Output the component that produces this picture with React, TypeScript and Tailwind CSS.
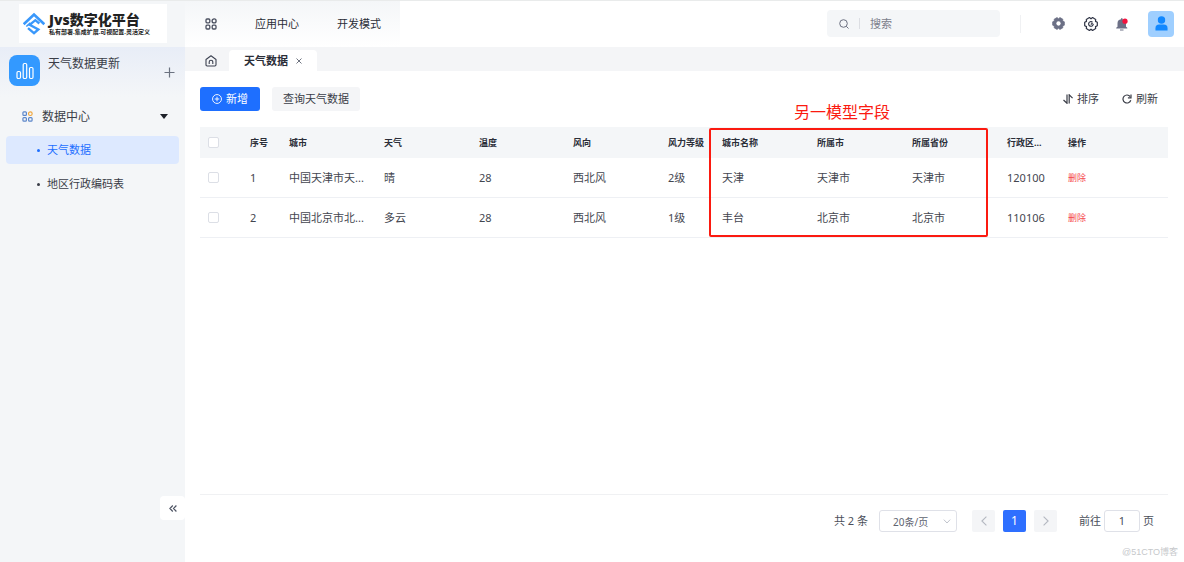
import React, { useState } from 'react';

interface WeatherRow {
  id: number;
  city: string;
  weather: string;
  temp: string;
  wind: string;
  level: string;
  name: string;
  belongCity: string;
  province: string;
  code: string;
}

const ROWS: WeatherRow[] = [
  { id: 1, city: '中国天津市天...', weather: '晴', temp: '28', wind: '西北风', level: '2级', name: '天津', belongCity: '天津市', province: '天津市', code: '120100' },
  { id: 2, city: '中国北京市北...', weather: '多云', temp: '28', wind: '西北风', level: '1级', name: '丰台', belongCity: '北京市', province: '北京市', code: '110106' },
];

const COLUMNS = [
  { title: '序号', width: 'w-[39px]' },
  { title: '城市', width: 'w-[95px]' },
  { title: '天气', width: 'w-[95px]' },
  { title: '温度', width: 'w-[94px]' },
  { title: '风向', width: 'w-[95px]' },
  { title: '风力等级', width: 'w-[54px]' },
  { title: '城市名称', width: 'w-[95px]' },
  { title: '所属市', width: 'w-[95px]' },
  { title: '所属省份', width: 'w-[95px]' },
  { title: '行政区...', width: 'w-[61px]' },
  { title: '操作', width: '' },
];

// six-lobed gear outline, shared by both settings buttons
const GEAR = 'M13.3 5.2V8.8L11.5 9.6 11.7 11.6 8.6 13.4 7 12.2 5.4 13.4 2.3 11.6 2.5 9.6.7 8.8V5.2L2.5 4.4 2.3 2.4 5.4.6 7 1.8 8.600.6 11.700 2.400 11.500 4.400Z';

const Logo = () => (
  <svg viewBox="0 0 66 68" className="w-[22px] h-[23px] shrink-0" fill="none" stroke="#3a98fb" strokeWidth="8">
    <path d="M2 36 33 7 64 36" />
    <path d="M49 34 37 24 20 38 46 52 33 63 15 48" strokeWidth="7" />
    <path d="M10 43 22 32" strokeWidth="5" />
  </svg>
);

const AppsIcon = ({ className, accent }: { className: string; accent?: string }) => (
  <svg viewBox="0 0 12 12" className={className} fill="none" stroke="currentColor" strokeWidth="1.3">
    <rect x="1" y="1" width="3.8" height="3.8" rx="1" />
    <circle cx="9.1" cy="2.9" r="2" stroke={accent || 'currentColor'} />
    <rect x="1" y="7.2" width="3.8" height="3.8" rx="1" />
    <rect x="7.2" y="7.2" width="3.8" height="3.8" rx="1" />
  </svg>
);

const Checkbox = ({ label }: { label: string }) => (
  <input
    type="checkbox"
    aria-label={label}
    className="block w-[11px] h-[11px] ml-2 appearance-none rounded-xs border border-[#dcdfe6] bg-white checked:bg-[#1e6fff]"
  />
);

const Sidebar = () => (
  <aside className="w-[185px] shrink-0 flex flex-col bg-[#f4f6f8] text-[#3a3d47]">
    <div className="h-[47px] shrink-0 pl-[19px] pt-1">
      <div className="w-[148px] h-[39px] bg-white flex items-center pl-1 gap-1">
        <Logo />
        <div className="text-[#222]">
          <div className="text-[14px] leading-[16px] font-black whitespace-nowrap">Jvs数字化平台</div>
          <div className="text-[6px] leading-[8px] font-bold whitespace-nowrap">私有部署.集成扩展.可视配置.灵活定义</div>
        </div>
      </div>
    </div>

    <div className="h-[50px] shrink-0 flex pl-[9px] pr-[10px] pt-2 bg-linear-to-b from-[#e8edf7] to-[#f4f6f8]">
      <div className="w-[31px] h-[31px] rounded-lg bg-[#3399ff] flex items-center justify-center">
        <svg viewBox="0 0 18 18" className="w-[18px] h-[18px]" fill="none" stroke="#fff" strokeWidth="1.2">
          <rect x="1" y="9.500" width="3.500" height="7" rx="1.200" />
          <rect x="7.200" y="1.500" width="3.500" height="15" rx="1.200" />
          <rect x="13.500" y="5.500" width="3.500" height="11" rx="1.200" />
        </svg>
      </div>
      <span className="ml-2 text-[12px] leading-[18px]">天气数据更新</span>
      <button type="button" aria-label="新建" className="ml-auto mt-3 w-[11px] h-[11px]">
        <svg viewBox="0 0 11 11" className="w-[11px] h-[11px]" stroke="#6b7280" strokeWidth="1.2">
          <path d="M5.5 .5v10M.5 5.5h10" />
        </svg>
      </button>
    </div>

    <nav className="px-[6px] pt-[5px]">
      <button type="button" className="w-full h-[29px] flex items-center pl-4 pr-[11px] text-[12px] leading-[16px]">
        <AppsIcon className="w-[11px] h-[11px] mr-[9px] text-[#5b86c9]" accent="#f0a63c" />
        数据中心
        <svg viewBox="0 0 8 5" className="w-2 h-[5px] ml-auto" fill="#1d2129">
          <path d="M0 0h8L4 5z" />
        </svg>
      </button>
      <a href="#weather" className="mt-[5px] h-[28px] flex items-center pl-[31px] rounded-[4px] bg-[#dde9ff] text-[#1e6fff] text-[11px] leading-[16px]">
        <i className="w-[3px] h-[3px] rounded-full bg-current mr-[7px]"></i>
        天气数据
      </a>
      <a href="#region" className="mt-[6px] h-[28px] flex items-center pl-[31px] text-[11px] leading-[16px]">
        <i className="w-[3px] h-[3px] rounded-full bg-current mr-[7px]"></i>
        地区行政编码表
      </a>
    </nav>

    <button type="button" aria-label="收起菜单" className="mt-auto mb-[42px] ml-auto w-[25px] h-[24px] rounded-[4px] bg-white flex items-center justify-center">
      <svg viewBox="0 0 8 7" className="w-2 h-[7px]" fill="none" stroke="#4e5464" strokeWidth="1.2">
        <path d="M3.8.5.9 3.5l2.9 3M7.4.5l-2.9 3 2.9 3" />
      </svg>
    </button>
  </aside>
);

const TopBar = () => (
  <header className="h-[47px] shrink-0 flex items-center">
    <div className="h-full w-[215px] flex items-center pt-px pl-[20px] bg-linear-to-b from-[#f4f6f8] to-white text-[11px] leading-[16px]">
      <button type="button" aria-label="应用" className="mr-[38px]">
        <AppsIcon className="w-[12px] h-[12px] text-[#4b5060]" />
      </button>
      <a href="#apps" className="mr-[38px]">应用中心</a>
      <a href="#dev">开发模式</a>
    </div>

    <div className="ml-auto w-[173px] h-[27px] rounded-[4px] bg-[#f4f6f8] flex items-center pl-3">
      <svg viewBox="0 0 10 10" className="w-[10px] h-[10px] shrink-0" fill="none" stroke="#6b7080" strokeWidth="1">
        <circle cx="4.5" cy="4.5" r="3.8" />
        <path d="M7.3 7.3 9.5 9.5" />
      </svg>
      <i className="w-px h-[11px] bg-[#dcdee3] mx-[10px] shrink-0"></i>
      <input
        type="text"
        aria-label="搜索"
        placeholder="搜索"
        className="w-full min-w-0 bg-transparent text-[11px] leading-[16px] outline-none placeholder:text-[#7c808c]"
      />
    </div>
    <i className="w-px h-[18px] bg-[#f0f1f3] ml-5"></i>

    <div className="flex items-center ml-[31px] mr-[10px]">
      <button type="button" aria-label="设置">
        <svg viewBox="0 0 14 14" className="w-[13px] h-[13px]" strokeLinejoin="round">
          <path d={GEAR} fill="#6c7086" stroke="#6c7086" strokeWidth=".8" />
          <circle cx="7" cy="7" r="2.300" fill="#fff" />
        </svg>
      </button>
      <button type="button" aria-label="系统配置" className="ml-[18px]">
        <svg viewBox="-1 -1 16 16" className="w-[16px] h-[16px]" fill="none" stroke="#2f3445" strokeWidth="1.2" strokeLinejoin="round" strokeLinecap="round">
          <path d={GEAR} />
          <path d="M9.200 7.400A2.300 2.300 0 1 1 8 4.900M7.200 7.200 8.300 6.300" />
        </svg>
      </button>
      <button type="button" aria-label="消息" className="ml-4">
        <svg viewBox="0 0 14 14" className="w-[14px] h-[14px]">
          <path d="M6 1.300h1.500v1a4.200 4.200 0 0 1 3.500 4.200v3.200l1.300 1.100v.8H1.200v-.8l1.300-1.100V6.500A4.200 4.200 0 0 1 6 2.300zM5 12.400h3.500v1H5z" fill="#6c7086" />
          <circle cx="10" cy="4.200" r="2.600" fill="#f5123d" />
        </svg>
      </button>
      <button type="button" aria-label="账户" className="ml-[19px] w-[26px] h-[26px] rounded-[4px] bg-[#9fcfff] flex items-center justify-center">
        <svg viewBox="0 0 14 16" className="w-[13px] h-[15px]" fill="#1188ff">
          <circle cx="7" cy="4.200" r="4" />
          <path d="M.5 15.500v-2.500Q.5 9 4.500 9h5q4 0 4 4v2.500z" />
        </svg>
      </button>
    </div>
  </header>
);

const TabBar = () => (
  <div className="h-[24px] shrink-0 flex items-end bg-[#f4f5f7]">
    <button type="button" aria-label="首页" className="ml-5 mb-1 mr-3">
      <svg viewBox="0 0 12 12" className="w-[12px] h-[12px]" fill="none" stroke="#3c4150" strokeWidth="1.1" strokeLinejoin="round">
        <path d="M1 4.500 6 .8l5 3.700v5.300q0 1.200-1.200 1.200H2.200Q1 11 1 9.800z" />
        <path d="M4.200 9V7a1.800 1.800 0 0 1 3.600 0v2" />
      </svg>
    </button>
    <div className="h-[21px] flex items-center px-[15px] rounded-t-[4px] bg-white">
      <span className="text-[11px] leading-[16px] font-bold">天气数据</span>
      <button type="button" aria-label="关闭" className="ml-2">
        <svg viewBox="0 0 6 6" className="w-[6px] h-[6px]" stroke="#5f6472" strokeWidth=".9">
          <path d="M.5.5l5 5M5.500.5l-5 5" />
        </svg>
      </button>
    </div>
  </div>
);

const WeatherTable = () => (
  <div className="relative mt-4">
    <table className="w-full table-fixed border-separate border-spacing-0 text-left">
      <thead>
        <tr className="h-[31px] bg-[#f4f6f8] text-[9px] leading-[14px]">
          <th className="w-[41px]"><Checkbox label="全选" /></th>
          {COLUMNS.map(col => (
            <th key={col.title} className={`${col.width} pl-[9px] font-bold whitespace-nowrap`}>{col.title}</th>
          ))}
        </tr>
      </thead>
      <tbody className="text-[11px] leading-[16px] text-[#43464f] [&_td]:border-b [&_td]:border-[#eef0f4]">
        {ROWS.map(row => (
          <tr key={row.id} className="h-[40px]">
            <td><Checkbox label={`选择第${row.id}行`} /></td>
            <td className="pl-[9px]">{row.id}</td>
            <td className="pl-[9px] whitespace-nowrap">{row.city}</td>
            <td className="pl-[9px]">{row.weather}</td>
            <td className="pl-[9px]">{row.temp}</td>
            <td className="pl-[9px]">{row.wind}</td>
            <td className="pl-[9px]">{row.level}</td>
            <td className="pl-[9px]">{row.name}</td>
            <td className="pl-[9px]">{row.belongCity}</td>
            <td className="pl-[9px]">{row.province}</td>
            <td className="pl-[9px]">{row.code}</td>
            <td className="pl-[9px]">
              <button type="button" className="block text-[9px] leading-[14px] text-[#f5474b]">删除</button>
            </td>
          </tr>
        ))}
      </tbody>
    </table>

    {/* callout around the joined-model columns */}
    <div className="absolute left-[509px] top-px w-[279px] h-[109px] border-2 border-[#fb1a10] rounded-xs pointer-events-none"></div>
    <div className="absolute left-[594px] -top-[25px] text-[16px] leading-[20px] text-[#fb1a10]">另一模型字段</div>
  </div>
);

const Pagination = () => {
  const [size, setSize] = useState('20');
  const [page, setPage] = useState('1');

  return (
    <footer className="mt-auto h-[68px] shrink-0 border-t border-[#f0f1f3] pt-[15px] pr-[14px] flex items-start justify-end text-[11px] leading-[22px] text-[#4b4f5a]">
      <span>共 2 条</span>
      <div className="relative ml-[11px] mr-[15px]">
        <select
          aria-label="每页条数"
          value={size}
          onChange={e => setSize(e.target.value)}
          className="block w-[78px] h-[22px] appearance-none rounded-[3px] border border-[#dfe1e8] bg-white pl-[13px] text-[10px] text-[#606470]"
        >
          <option value="20">20条/页</option>
          <option value="50">50条/页</option>
        </select>
        <svg viewBox="0 0 8 5" className="absolute right-[6px] top-[9px] w-2 h-[5px] pointer-events-none" fill="none" stroke="#c0c4cc" strokeWidth="1">
          <path d="M.8.6 4 4 7.200.6" />
        </svg>
      </div>
      <button type="button" aria-label="上一页" className="w-[23px] h-[22px] rounded-xs bg-[#f4f5f7] flex items-center justify-center">
        <svg viewBox="0 0 6 10" className="w-[6px] h-[10px]" fill="none" stroke="#b4b8c1" strokeWidth="1.1"><path d="M5.400.6.9 5l4.500 4.400" /></svg>
      </button>
      <button type="button" className="w-[23px] h-[22px] mx-2 rounded-xs bg-[#2e6fff] text-white text-[12px]">1</button>
      <button type="button" aria-label="下一页" className="w-[23px] h-[22px] rounded-xs bg-[#f4f5f7] flex items-center justify-center">
        <svg viewBox="0 0 6 10" className="w-[6px] h-[10px]" fill="none" stroke="#b4b8c1" strokeWidth="1.1"><path d="M.6.6 5.100 5 .6 9.400" /></svg>
      </button>
      <label htmlFor="page-jump" className="ml-[22px] mr-[3px]">前往</label>
      <input
        id="page-jump"
        type="text"
        value={page}
        onChange={e => setPage(e.target.value)}
        className="w-[36px] h-[22px] mr-[3px] rounded-[3px] border border-[#dfe1e8] text-center text-[11px] outline-none"
      />
      <span>页</span>
    </footer>
  );
};

export default function App() {
  return (
    <div className="relative min-h-screen flex bg-white text-[#2b2e38] font-['Noto_Sans','Noto_Sans_CJK_SC',sans-serif]">
      <div className="absolute inset-x-0 top-0 h-px bg-[#e9ebeb]"></div>
      <Sidebar />
      <div className="flex-1 min-w-0 flex flex-col">
        <TopBar />
        <TabBar />
        <main className="flex-1 flex flex-col pl-[15px] pr-4 pt-4">
          <div className="flex items-center text-[11px] leading-[16px] text-[#3a3d47]">
            <button type="button" className="h-[24px] px-3 flex items-center gap-1 rounded-[3px] bg-[#1e6fff] text-white">
              <svg viewBox="0 0 11 11" className="w-[10px] h-[10px]" fill="none" stroke="currentColor" strokeWidth="1">
                <circle cx="5.500" cy="5.500" r="4.900" />
                <path d="M5.500 3v5M3 5.500h5" />
              </svg>
              新增
            </button>
            <button type="button" className="h-[24px] px-[11px] ml-3 rounded-[3px] bg-[#f4f5f7]">查询天气数据</button>
            <button type="button" className="ml-auto flex items-center gap-1">
              <svg viewBox="0 0 10 10" className="w-[10px] h-[10px]" fill="none" stroke="currentColor" strokeWidth="1.200">
                <path d="M.5 6 4 9.300V.5M6.200 9.500V.8L9.600 4.200" />
              </svg>
              排序
            </button>
            <button type="button" className="ml-[23px] mr-[10px] flex items-center gap-1">
              <svg viewBox="0 0 10 10" className="w-[10px] h-[10px]" fill="none" stroke="currentColor" strokeWidth="1.200">
                <path d="M8.800 6.200A4 4 0 1 1 8.200 2.600" />
                <path d="M9 .6v3.200H5.900" />
              </svg>
              刷新
            </button>
          </div>
          <WeatherTable />
          <Pagination />
        </main>
      </div>
      <div className="absolute right-[6px] bottom-1 text-[9px] leading-[12px] text-[#c6c8cb] font-['Liberation_Sans','Noto_Sans_CJK_SC',sans-serif]">@51CTO博客</div>
    </div>
  );
}
